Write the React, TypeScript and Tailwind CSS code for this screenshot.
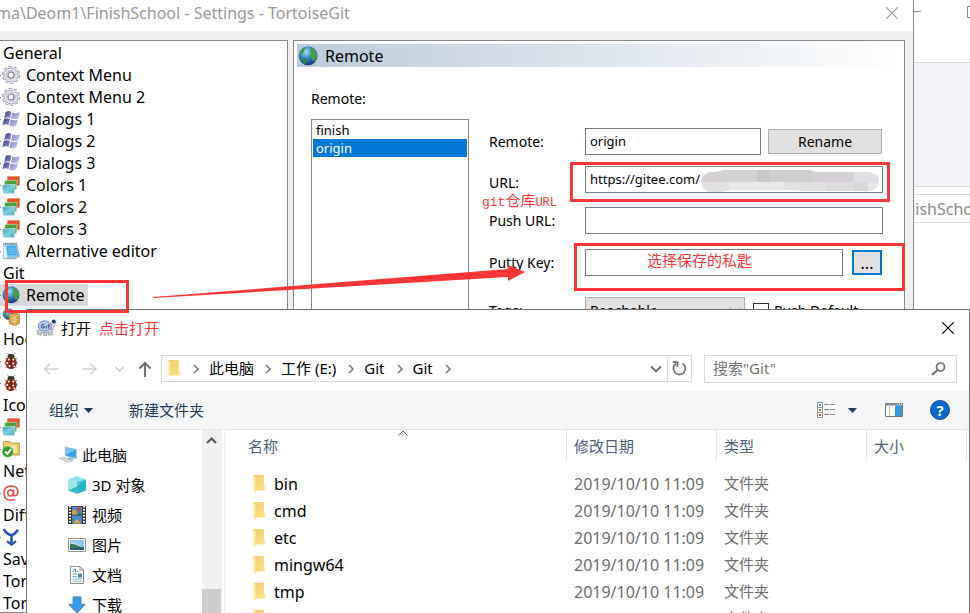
import { useState } from "react";
import type { ReactNode } from "react";

const files = ["bin", "cmd", "etc", "mingw64", "tmp", "usr"];

function Gradients() {
  return (
    <svg className="absolute w-0 h-0" aria-hidden="true">
      <defs>
        <radialGradient id="globe" cx="0.4" cy="0.3" r="0.75">
          <stop offset="0" stopColor="#a8dcf8" /><stop offset="0.45" stopColor="#3b86cc" /><stop offset="1" stopColor="#0e2a6b" />
        </radialGradient>
        <linearGradient id="teal" x1="0" y1="0" x2="1" y2="1">
          <stop offset="0" stopColor="#2a9cb4" /><stop offset="0.5" stopColor="#7fd0dc" /><stop offset="1" stopColor="#2d9fb8" />
        </linearGradient>
        <linearGradient id="folder" x1="0" y1="0" x2="1" y2="1">
          <stop offset="0" stopColor="#eecb6c" /><stop offset="1" stopColor="#ffe28c" />
        </linearGradient>
        <linearGradient id="flagDark" x1="0" y1="0" x2="1" y2="1">
          <stop offset="0" stopColor="#3c3c86" /><stop offset="1" stopColor="#8f90cc" />
        </linearGradient>
        <linearGradient id="flagLight" x1="0" y1="0" x2="1" y2="1">
          <stop offset="0" stopColor="#7b7cc4" /><stop offset="1" stopColor="#cfd0f4" />
        </linearGradient>
      </defs>
    </svg>
  );
}

function Icon({ children, size = 18 }: { children: ReactNode; size?: number }) {
  return <svg width={size} height={size} viewBox="0 0 18 18" fill="none" className="shrink-0" aria-hidden="true">{children}</svg>;
}

const GearIcon = () => (
  <Icon>
    <circle cx="9" cy="9" r="7.8" stroke="#8f8fa2" strokeWidth="2.4" strokeDasharray="3 1.9" />
    <circle cx="9" cy="9" r="6.9" fill="#e2e2ec" stroke="#9a9aac" strokeWidth="1" />
    <circle cx="9" cy="9" r="7.4" stroke="#e6e6ef" strokeWidth="1.6" strokeDasharray="2.3 2.35" strokeDashoffset="-0.3" />
    <circle cx="9" cy="9" r="4.4" stroke="#c3c3d2" strokeWidth="0.9" />
    <circle cx="9" cy="9" r="3" fill="#fff" stroke="#838398" strokeWidth="1.2" />
  </Icon>
);

const FlagIcon = () => (
  <Icon>
    <path d="M3.6 2.2C5.7.6 7.3.7 9.4 1.9L8.1 8C6.2 7 4.5 7 2.2 8.2Z" fill="url(#flagDark)" />
    <path d="M10.4 2.4C12.5 3.5 14.9 3.5 17.8 2.2L16.1 8.4C13.4 9.6 11.3 9.4 9.1 8.4Z" fill="url(#flagLight)" />
    <path d="M1.9 9.1C4 7.9 6 7.9 7.9 9L6.5 15C4.6 13.9 2.7 14 .4 15.2Z" fill="url(#flagDark)" />
    <path d="M8.8 9.5C11.1 10.6 13.2 10.6 15.800 9.400L14.200 15.600C11.600 17 9.300 16.800 7.300 15.600Z" fill="url(#flagLight)" />
  </Icon>
);

const ColorsIcon = () => (
  <Icon>
    <path d="M5.500 .6L17.700.4V9L14.500 10L5 6Z" fill="#e9502b" stroke="#d98a6c" strokeWidth="0.6" />
    <path d="M3 4.600L15.300 4.200L14.200 13.500L12 14L2.500 10Z" fill="#46a13a" stroke="#bcdcae" strokeWidth="0.7" />
    <path d="M.4 9L13.200 8.400L12.200 17.200L1.300 17.600Z" fill="url(#teal)" stroke="#c2e0e6" strokeWidth="0.8" />
  </Icon>
);

const NotepadIcon = () => (
  <Icon>
    <path d="M1.500 1.500L14.500 1.200L17.400 14.500L12 17L1.300 16.600Z" fill="#8fc7e8" stroke="#8a9aa8" strokeWidth="0.8" />
    <path d="M4.2 4L13.5 3.6L15.8 13.2L5.5 13.6Z" fill="#45aeea" />
    <path d="M1.500 3L3.8 4.4L5.2 16L1.500 16.400Z" fill="#dff0f7" />
    <path d="M3 1.8H14" stroke="#8c7c4c" strokeWidth="1.8" strokeDasharray="1 1.2" />
    <path d="M6 6.5L14 6M6.5 8.7L14.5 8.3M7 11L15 10.6" stroke="#7acaf5" strokeWidth="0.8" />
  </Icon>
);

const GlobeIcon = ({ size = 18 }: { size?: number }) => (
  <Icon size={size}>
    <ellipse cx="11" cy="16.3" rx="6" ry="1.5" fill="#bfc2c6" />
    <circle cx="9" cy="8.8" r="8.5" fill="url(#globe)" />
    <path d="M1.800 5.500C2.800 3.200 4.500 1.600 6.500 .9L7.200 2.200L5.200 3.600L5.600 5.200L3.800 6.600L4.400 8.200L2.600 8.800Z" fill="#3f9c48" />
    <path d="M3.500 10.500L6 10.600L8 12.400L7.600 14.600L6.600 16.600L4.400 14.800Z" fill="#2f8640" />
    <path d="M10.800 2.400L13.400 2L16 4.800L17.200 8.500L16 12.400L13.600 14.500L12.600 11.200L10.800 9.400L11.400 6.400Z" fill="#3fa04a" />
  </Icon>
);

const GlobeBoxIcon = () => (
  <Icon>
    <circle cx="6.5" cy="6" r="5.8" fill="url(#globe)" />
    <path d="M1.5 4L5 1L6 3L4 6L5 9L3 9Z" fill="#3d9a48" />
    <path d="M7 6.5L13.5 4.5L18 6.5V15L13 17.7L7 15.5Z" fill="#cda34e" stroke="#a9843b" strokeWidth="0.6" />
    <path d="M7.5 7L12.7 8.7V17M12.7 8.7L17.7 7" stroke="#ecd28c" strokeWidth="0.8" />
    <circle cx="12" cy="11.8" r="2.1" stroke="#f0e4c0" strokeWidth="0.9" />
  </Icon>
);

const BugIcon = () => (
  <Icon>
    <path d="M5.5 1.2L7.4 3.5M12.7 1.2L10.8 3.5M4.3 7L2.8 6M4 11H2.3M5 14.5L3.6 16M13.8 7L15.2 6M14 11H15.8M13 14.5L14.5 16" stroke="#666" strokeWidth="0.8" />
    <ellipse cx="9" cy="4.5" rx="3.5" ry="2.5" fill="#333" />
    <ellipse cx="9" cy="10.7" rx="5.8" ry="6.3" fill="#8f2e19" />
    <path d="M9 5V17" stroke="#4b1a10" strokeWidth="0.9" />
    <g fill="#fff"><circle cx="6.9" cy="7.5" r="1" /><circle cx="11.3" cy="7.5" r="1" /><circle cx="5.2" cy="11" r="1" /><circle cx="7.6" cy="13.9" r="1" /><circle cx="11.2" cy="11.6" r="1" /><circle cx="12.2" cy="14.4" r="0.8" /></g>
  </Icon>
);

const CheckFolderIcon = () => (
  <Icon>
    <path d="M1 3.500Q1 1.500 3 1.500H7.500L9 3H16.500Q18 3 18 4.500V13.500Q18 15 16.500 15H3Z" fill="#e8cb68" stroke="#a58c35" strokeWidth="0.8" />
    <path d="M3 5.500H14.500V13H3Z" fill="#f5e7a6" />
    <circle cx="5.700" cy="11.700" r="5.400" fill="#2f9f2f" stroke="#7abf6c" strokeWidth="0.6" />
    <path d="M3.2 11.5L5.4 14L9 9.2" stroke="#fff" strokeWidth="2" />
  </Icon>
);

const MergeIcon = () => (
  <Icon>
    <path d="M1.500 1Q5.500 7 9.500 7Q13 6.500 16 1.800M9.500 7V15.500" stroke="#2b55b2" strokeWidth="2.600" />
    <path d="M5 13.200L9.500 16.800L14 13.200" stroke="#2b55b2" strokeWidth="2.200" />
  </Icon>
);

const AtIcon = () => (
  <Icon>
    <circle cx="8.600" cy="9" r="2.900" stroke="#f04545" strokeWidth="1.500" />
    <path d="M11.800 5.500L11.400 10.200Q11.600 12.200 13.400 11.600Q16 10.700 16 8Q15.800 2 9.300 2Q2 2.200 2 9.200Q2.200 16.200 9 16.300Q11 16.300 12.800 15.400" stroke="#f04545" strokeWidth="1.500" />
  </Icon>
);

const FolderIcon = () => (
  <svg width="13" height="18" viewBox="0 0 13 18" className="shrink-0" aria-hidden="true">
    <path d="M1 0H12V10.5L13 11.5V15.5H3Z" fill="url(#folder)" />
    <path d="M1 0L4 2.5V17.5L1 15.5Z" fill="#ffeeb0" />
    <path d="M4 2.5V17.5L3.2 17V2Z" fill="#f4d885" />
  </svg>
);

const TurtleIcon = () => (
  <Icon size={20}>
    <path d="M3 11L1 14.500L4.500 15.500L5.500 12ZM11 12L11.500 15.500L15 15L14 11Z" fill="#d8dadc" stroke="#888c92" strokeWidth="0.7" />
    <path d="M6.500 13L7 15.800H10L9.500 13Z" fill="#c8cacd" stroke="#888c92" strokeWidth="0.5" />
    <ellipse cx="8" cy="11.600" rx="7.200" ry="1.700" fill="#dcdee0" stroke="#888c92" strokeWidth="0.6" />
    <ellipse cx="8" cy="7.200" rx="6" ry="4.600" fill="#b4cbf0" stroke="#6d86b4" strokeWidth="0.9" />
    <path d="M7.400 5.800Q4.800 4.900 4.600 7.500Q4.900 9.800 7.300 8.900V7.600H6.200M9.300 7V9.500M11.500 5.400V9.500M10.600 6.800H12.700" stroke="#344e86" strokeWidth="0.9" />
    <path d="M13.600 9.500L14 5.500L15.500 2.800L17.600 4L16.600 6.800L14.900 10.500Z" fill="#dcdee0" stroke="#777b80" strokeWidth="0.6" />
    <circle cx="16" cy="3.200" r="1.800" fill="#1d455e" />
  </Icon>
);

const MonitorIcon = () => (
  <Icon>
    <path d="M6 1L17.3 3.4V12.5L6.5 9.8Z" fill="#34a1df" stroke="#a6c7dc" strokeWidth="0.8" />
    <path d="M6.5 1.6L16.8 3.9L7 8.8Z" fill="#73c6f2" />
    <path d="M9.5 11L14.5 12.3V13.5L9 13Z" fill="#9ba9b7" />
    <path d="M.3 12.3L4.2 11.2L13.8 14.5L9.8 16.2Z" fill="#d7dde2" stroke="#a1adb8" strokeWidth="0.6" />
  </Icon>
);

const CubeIcon = () => (
  <Icon>
    <path d="M0 3.500L9 .2L18 3.500L9 6.200Z" fill="#8fe3ee" />
    <path d="M0 3.500L9 6.200V17.800L0 14.500Z" fill="#9fe4ec" />
    <path d="M18 3.500L9 6.200V17.800L18 14.500Z" fill="#22b5cb" />
    <path d="M0 14.500L9 10.500V17.800Z" fill="#3cb7ca" />
    <path d="M18 3.500L9 10.500V6.200Z" fill="#43c6d8" />
  </Icon>
);

const FilmIcon = () => (
  <Icon>
    <path d="M0 0H18V18H0Z" fill="#3a3a3a" />
    <path d="M2 0V18M16 0V18" stroke="#fff" strokeWidth="2" strokeDasharray="1.5 1.5" />
    <path d="M4 .8H14V8.6H4ZM4 9.6H14V17.5H4Z" fill="#4f8ccc" />
    <path d="M4 5.5L7 3L9 8.6H4ZM5 17.5L9 13L13 17.5Z" fill="#d7a53b" />
    <circle cx="11" cy="3.5" r="2.1" fill="#bd4b36" /><path d="M9 8.6L12 6L14 8.6ZM4 12L6 14L5 17Z" fill="#48723d" />
  </Icon>
);

const PictureIcon = () => (
  <Icon>
    <path d="M.5 2.5H17.5V15.5H.5Z" fill="#fff" stroke="#939393" />
    <path d="M2 4H16V14H2Z" fill="#91c8f1" />
    <path d="M2 6Q7 7 16 11V14H2Z" fill="#d4e7ef" />
    <path d="M2 7.5Q8 8 12 10.5L16 11V14H2Z" fill="#39775c" />
    <path d="M2 12.7L16 11.5V14H2Z" fill="#285b87" />
  </Icon>
);

const DocIcon = () => (
  <Icon>
    <path d="M2.5.5H12L15.5 4V17.5H2.5Z" fill="#fff" stroke="#8b8b8b" />
    <path d="M12 .5V4H15.5" stroke="#8b8b8b" />
    <path d="M4.5 6L6.8 3H7.5V6" stroke="#3b91d4" />
    <path d="M9 5.5H10.5M4.5 8H9M4.5 10.5H9M4.5 13H13.5M4.5 15.2H13.5" stroke="#739eb9" strokeWidth="0.9" />
    <path d="M10 7.5H14V11.5H10Z" fill="#438fbe" />
  </Icon>
);

const DownloadIcon = () => (
  <Icon><path d="M5 .8H13V8.4H17.2L9 17.2L.8 8.4H5Z" fill="#3b9be8" stroke="#2e7fc2" strokeWidth="0.7" /></Icon>
);

const Cross = () => (
  <svg width="12" height="12" viewBox="0 0 12 12" aria-hidden="true"><path d="M0 0L12 12M12 0L0 12" stroke="currentColor" strokeWidth="1.1" /></svg>
);

const Chevron = ({ className = "" }: { className?: string }) => (
  <svg width="6" height="10" viewBox="0 0 6 10" fill="none" className={`shrink-0 text-[#808080] ${className}`} aria-hidden="true">
    <path d="M1 1L5 5L1 9" stroke="currentColor" strokeWidth="1.7" />
  </svg>
);

const Triangle = () => (
  <svg width="9" height="5" viewBox="0 0 9 5" aria-hidden="true"><path d="M0 0H9L4.5 5Z" fill="#1e395b" /></svg>
);

const tree: { label?: string; icon?: () => ReactNode }[] = [
  { label: "General" },
  { label: "Context Menu", icon: GearIcon },
  { label: "Context Menu 2", icon: GearIcon },
  { label: "Dialogs 1", icon: FlagIcon },
  { label: "Dialogs 2", icon: FlagIcon },
  { label: "Dialogs 3", icon: FlagIcon },
  { label: "Colors 1", icon: ColorsIcon },
  { label: "Colors 2", icon: ColorsIcon },
  { label: "Colors 3", icon: ColorsIcon },
  { label: "Alternative editor", icon: NotepadIcon },
  { label: "Git" },
  { label: "Remote", icon: GlobeIcon },
  { icon: GlobeBoxIcon },
  { label: "Hoo" },
  { icon: BugIcon },
  { icon: BugIcon },
  { label: "Icon" },
  { icon: ColorsIcon },
  { icon: CheckFolderIcon },
  { label: "Net" },
  { icon: AtIcon },
  { label: "Diff" },
  { icon: MergeIcon },
  { label: "Sav" },
  { label: "Tor" },
  { label: "Tor" },
];

const places = [
  { label: "3D 对象", icon: CubeIcon },
  { label: "视频", icon: FilmIcon },
  { label: "图片", icon: PictureIcon },
  { label: "文档", icon: DocIcon },
  { label: "下载", icon: DownloadIcon },
];

function ExplorerWindow() {
  return (
    <div className="absolute inset-y-0 right-0 w-[120px] bg-white text-[#8a8a8a] overflow-hidden">
      <div className="h-[62px] flex justify-end items-start pt-[6px]">
        <svg width="57" height="12" viewBox="0 0 57 12" fill="none" aria-hidden="true"><path d="M0 5.5H8M54.5.5H65.5V11.5H54.5Z" stroke="#8a8a8a" /></svg>
      </div>
      <div className="h-[125px] bg-[#f4f5f8] border-y border-[#d9d9d9]" />
      <div className="mt-[7px] h-[29px] border-y border-[#d9d9d9] pl-[43px] flex items-center text-base">FinishSchool</div>
    </div>
  );
}

function SettingsTree() {
  const [selected, setSelected] = useState(11);
  return (
    <ul className="w-72 shrink-0 bg-white border border-l-0 border-[#828790] pt-px overflow-hidden text-base">
      {tree.map((item, i) => {
        const ItemIcon = item.icon;
        return (
          <li key={i} onClick={() => setSelected(i)} className="h-[22px] flex cursor-default">
            <span className={["flex items-center h-full whitespace-nowrap", ItemIcon ? "gap-[6px] pr-1" : "pl-[3px]",
              selected === i ? "bg-[#d9d9d9]" : ""].join(" ")}>
              {ItemIcon && <span className="flex items-center gap-px"><span className="w-px h-px bg-[#808080]" /><ItemIcon /></span>}
              {item.label}
            </span>
          </li>
        );
      })}
    </ul>
  );
}

function RemoteForm() {
  const [remote, setRemote] = useState("origin");
  const [url, setUrl] = useState("https://gitee.com/");
  const [pushUrl, setPushUrl] = useState("");
  const [puttyKey, setPuttyKey] = useState("");
  const [pushDefault, setPushDefault] = useState(false);
  const label = "w-24 shrink-0";
  const input = "min-w-0 flex-1 h-[27px] bg-white border border-[#7a7a7a] px-1 pb-px outline-none text-[13px]";

  return (
    <div className="flex gap-5 pl-[14px] pr-[18px] text-sm flex-1 min-h-0">
      <div className="w-[158px] shrink-0 flex flex-col pt-[22px]">
        <span className="h-[30px]" id="remotes">Remote:</span>
        <ul role="listbox" aria-labelledby="remotes" className="flex-1 border border-[#828790] p-px text-[13px] leading-[18px]">
          {["finish", "origin"].map((r) => (
            <li key={r} role="option" aria-selected={remote === r} onClick={() => setRemote(r)}
              className={["px-[3px]", remote === r ? "bg-[#0078d7] text-white" : ""].join(" ")}>{r}</li>
          ))}
        </ul>
      </div>

      <form className="flex-1 min-w-0 flex flex-col pt-[61px]" onSubmit={(e) => e.preventDefault()}>
        <div className="flex items-center">
          <label htmlFor="remote" className={label}>Remote:</label>
          <input id="remote" value={remote} onChange={(e) => setRemote(e.target.value)} className={input} />
          <button type="button" className="ml-[7px] mr-px w-[114px] h-[25px] bg-[#e1e1e1] border border-[#adadad]">Rename</button>
        </div>
        <div className="flex items-end mt-[11px]">
          <label htmlFor="url" className={label}>URL:</label>
          <div className="relative flex-1 flex">
            <input id="url" value={url} onChange={(e) => setUrl(e.target.value)} className={input} />
            <svg viewBox="0 0 178 22" width="178" height="22" className="absolute right-1 top-1" aria-hidden="true">
              <clipPath id="smear"><path d="M10 2Q18 2 22 0H108Q112 2 120 2H166Q178 3 178 12Q177 20 167 21H105L96 20H28Q24 22 10 22Q0 20 0 11Q2 3 10 2Z" /></clipPath>
              <g clipPath="url(#smear)">
                <path d="M0 0H178V22H0Z" fill="#dcdcde" />
                <path d="M0 0H28V12H0Z" fill="#d5d1d4" /><path d="M28 0H56V12H28Z" fill="#d2d2d5" /><path d="M56 0H69V12H56Z" fill="#c8c8ca" />
                <path d="M69 0H111V12H69Z" fill="#cecdcf" /><path d="M111 0H153V12H111Z" fill="#d4d0d5" /><path d="M153 0H178V12H153Z" fill="#dfe0e3" />
                <path d="M0 12H28V22H0Z" fill="#e1e1e3" /><path d="M28 12H83V22H28Z" fill="#e7e7e8" /><path d="M83 12H125V22H83Z" fill="#dfe0e2" />
                <path d="M153 12H167V22H153Z" fill="#d8d8d9" /><path d="M167 12H178V22H167Z" fill="#e6e6ea" />
              </g>
            </svg>
          </div>
        </div>
        <div className="flex items-center mt-[14px]">
          <label htmlFor="push" className={label}>Push URL:</label>
          <input id="push" value={pushUrl} onChange={(e) => setPushUrl(e.target.value)} className={input} />
        </div>
        <div className="flex items-center mt-[15px]">
          <label htmlFor="putty" className={label}>Putty Key:</label>
          <input id="putty" value={puttyKey} onChange={(e) => setPuttyKey(e.target.value)} className={input} />
          <button type="button" className="ml-[9px] mr-px w-[30px] h-[25px] bg-[#e1e1e1] border-2 border-[#0078d7] flex items-center justify-center text-base">...</button>
        </div>
        <div className="flex items-center mt-[21px]">
          <label htmlFor="tags" className={label}>Tags:</label>
          <div className="relative">
            <select id="tags" className="appearance-none w-40 h-[27px] px-1 bg-[#e1e1e1] border border-[#adadad]">
              <option>Reachable</option>
            </select>
            <svg width="10" height="6" viewBox="0 0 10 6" fill="none" className="absolute right-[5px] top-[11px]" aria-hidden="true"><path d="M.5.5L5 5L9.5.5" stroke="#444" /></svg>
          </div>
          <label className="flex items-center gap-[5px] ml-2 whitespace-nowrap">
            <input type="checkbox" checked={pushDefault} onChange={(e) => setPushDefault(e.target.checked)}
              className="appearance-none size-4 border border-[#333] bg-white checked:bg-[#0078d7]" />
            Push Default
          </label>
        </div>
      </form>
    </div>
  );
}

function SettingsWindow() {
  return (
    <div className="absolute inset-y-0 left-0 right-14 bg-[#f0f0f0] border-r border-[#8a8a8a] flex flex-col overflow-hidden">
      <div className="h-[31px] shrink-0 bg-white flex items-center justify-between pr-[15px] pb-[6px] text-base text-[#999]">
        <span className="-ml-1 whitespace-nowrap">ma\Deom1\FinishSchool - Settings - TortoiseGit</span>
        <button type="button" aria-label="Close"><Cross /></button>
      </div>
      <div className="flex-1 min-h-0 flex gap-[5px] pt-[9px] pr-2">
        <SettingsTree />
        <div className="flex-1 min-w-0 bg-white border border-[#828790] p-[3px] pb-0 flex flex-col">
          <h2 className="h-[23px] shrink-0 pl-px flex items-center gap-[7px] text-base bg-linear-to-r from-[#bccbda] to-white"><GlobeIcon size={20} />Remote</h2>
          <RemoteForm />
        </div>
      </div>
    </div>
  );
}

function OpenDialog() {
  const [query, setQuery] = useState("");
  return (
    <div role="dialog" aria-label="打开" className="absolute top-[309px] bottom-0 left-[26px] right-0 bg-white border border-b-0 border-[#707070] flex flex-col overflow-hidden text-[15px]">
      <div className="h-9 shrink-0 flex items-center pl-[9px] pr-[15px]">
        <TurtleIcon />
        <span className="ml-[5px]">打开</span>
        <span className="ml-2 text-[#fc3636]">点击打开</span>
        <button type="button" aria-label="关闭" className="ml-auto"><Cross /></button>
      </div>

      <div className="h-[45px] shrink-0 flex items-center pl-4 pr-3">
        <svg width="112" height="18" viewBox="0 0 112 18" fill="none" className="shrink-0" aria-hidden="true">
          <path d="M15.5 9H1.5M7 3.5L1.5 9L7 14.5M39 9H53M47.5 3.5L53 9L47.5 14.5" stroke="#d0d0d0" strokeWidth="1.5" />
          <path d="M72.5 7L76.5 11L80.5 7" stroke="#c8c8c8" strokeWidth="1.4" />
          <path d="M102 17V3M96.5 8.5L102 3L107.5 8.5" stroke="#707070" strokeWidth="2" />
        </svg>
        <nav className="ml-[6px] flex-1 h-[27px] border border-[#d9d9d9] flex items-center pl-[5px]">
          <FolderIcon />
          <Chevron className="ml-[13px]" />
          <a href="#pc" className="ml-[10px]">此电脑</a>
          <Chevron className="ml-[11px]" />
          <a href="#e" className="ml-[10px]">工作 (E:)</a>
          <Chevron className="ml-3" />
          <a href="#git" className="ml-[10px]">Git</a>
          <Chevron className="ml-3" />
          <a href="#git2" className="ml-[10px]">Git</a>
          <Chevron className="ml-3" />
          <svg width="12" height="8" viewBox="0 0 12 8" fill="none" className="ml-auto mr-[5px]" aria-hidden="true"><path d="M1 1.5L6 6.5L11 1.5" stroke="#707070" strokeWidth="1.8" /></svg>
          <button type="button" aria-label="刷新" className="w-6 h-full border-l border-[#d9d9d9] flex items-center justify-center">
            <svg width="15" height="15" viewBox="0 0 15 15" fill="none" aria-hidden="true">
              <path d="M10.5 2.5A6 6 0 1 1 4.3 2.5" stroke="#707070" strokeWidth="1.7" /><path d="M.8 1.2H5.5V6" stroke="#707070" strokeWidth="1.7" />
            </svg>
          </button>
        </nav>
        <div className="ml-3 w-[253px] h-7 border border-[#d9d9d9] flex items-center pl-2 pr-[10px]">
          <input aria-label={'搜索"Git"'} placeholder={'搜索"Git"'} value={query} onChange={(e) => setQuery(e.target.value)}
            className="flex-1 min-w-0 outline-none placeholder-[#757575]" />
          <svg width="15" height="14" viewBox="0 0 15 14" fill="none" aria-hidden="true"><circle cx="9.5" cy="5" r="4" stroke="#707070" strokeWidth="1.7" /><path d="M6.5 8L1 13" stroke="#707070" strokeWidth="2" /></svg>
        </div>
      </div>

      <div className="h-[39px] shrink-0 bg-[#f4f6f8] border-b border-[#e5e5e5] flex items-center pl-[22px] pr-[19px] text-[#1e395b]">
        <button type="button" className="flex items-center gap-[5px]">组织<Triangle /></button>
        <button type="button" className="ml-9">新建文件夹</button>
        <button type="button" aria-label="更改视图" className="ml-auto flex items-center gap-[13px]">
          <svg width="18" height="16" viewBox="0 0 18 16" fill="none" aria-hidden="true">
            <path d="M.5.5H5.5V15.5H.5ZM.5 5.5H5.5M.5 10.5H5.5" fill="#fff" stroke="#8e8e8e" />
            <path d="M2 2H4V4H2Z" fill="#2684d1" /><path d="M2 7H4V9H2Z" fill="#928642" /><path d="M2 12H4V14H2Z" fill="#c1502e" />
            <path d="M7 2.5H12M13 2.5H18M7 7.5H12M13 7.5H18M7 12.5H12M13 12.5H18" stroke="#8e8e8e" />
          </svg>
          <Triangle />
        </button>
        <button type="button" aria-label="预览窗格" className="ml-7">
          <svg width="18" height="14" viewBox="0 0 18 14" fill="none" aria-hidden="true">
            <path d="M.5.5H17.5V13.5H.5Z" fill="#fff" stroke="#777" /><path d="M0 0H18V2.5H0Z" fill="#888" /><path d="M10 2.5H17V13H10Z" fill="#3697e2" /><path d="M4.5 2.5V13" stroke="#bbb" /><path d="M12 1.2H17" stroke="#fff" strokeDasharray="1 1" />
          </svg>
        </button>
        <button type="button" aria-label="帮助" className="ml-[27px] size-5 rounded-full bg-[#0067cb] border border-[#174d85] text-white font-bold text-[15px] leading-none flex items-center justify-center">?</button>
      </div>

      <div className="flex-1 min-h-0 flex">
        <ul className="w-[175px] shrink-0 pt-[10px] overflow-hidden">
          <li className="h-[30px] flex items-center gap-[5px] pl-8"><MonitorIcon />此电脑</li>
          {places.map(({ label, icon: PlaceIcon }) => (
            <li key={label} className="h-[30px] flex items-center gap-[6px] pl-[41px]"><PlaceIcon />{label}</li>
          ))}
        </ul>
        <div className="w-5 shrink-0 bg-[#f0f0f0] flex flex-col justify-between">
          <svg width="20" height="22" viewBox="0 0 20 22" fill="none" aria-hidden="true"><path d="M5 13L9.5 8.5L14 13" stroke="#555" strokeWidth="2" /></svg>
          <div className="h-6 mr-px bg-[#cdcdcd]" />
        </div>
        <div className="flex-1 min-w-0 ml-[2px] border-l border-[#f0f0f0] overflow-hidden">
          <table className="w-full table-fixed text-left">
            <colgroup>
              <col /><col className="w-[150px]" /><col className="w-[150px]" /><col className="w-[100px]" /><col className="w-[2px]" />
            </colgroup>
            <thead className="text-[#4c607a]">
              <tr>
                <th className="relative p-0 pb-2 font-normal">
                  <svg width="10" height="6" viewBox="0 0 10 6" fill="none" className="absolute left-[173px] top-0" aria-hidden="true"><path d="M.5 5.5L5 1L9.5 5.5" stroke="#666" /></svg>
                  <div className="h-8 flex items-center pl-[23px] border-r border-[#e5e5e5]">名称</div>
                </th>
                <th className="p-0 pb-2 font-normal"><div className="h-8 flex items-center pl-[7px] border-r border-[#e5e5e5]">修改日期</div></th>
                <th className="p-0 pb-2 font-normal"><div className="h-8 flex items-center pl-[7px] border-r border-[#e5e5e5]">类型</div></th>
                <th className="p-0 pb-2 font-normal"><div className="h-8 flex items-center pl-[7px] border-r border-[#e5e5e5]">大小</div></th>
                <th className="p-0" />
              </tr>
            </thead>
            <tbody>
              {files.map((f) => (
                <tr key={f} className="h-[27px] text-[#6d6d6d]">
                  <td className="p-0"><div className="h-[27px] flex items-center gap-[9px] pl-[27px] text-base text-black"><FolderIcon />{f}</div></td>
                  <td className="p-0 pl-[7px] text-base whitespace-nowrap">2019/10/10 11:09</td>
                  <td className="p-0 pl-[7px]">文件夹</td>
                  <td className="p-0" />
                  <td className="p-0" />
                </tr>
              ))}
            </tbody>
          </table>
        </div>
      </div>
    </div>
  );
}

// red marks drawn over the windows
function Annotations() {
  return (
    <div className="absolute inset-0 pointer-events-none text-[#fc3636] text-[15px] leading-5">
      <div className="absolute left-[5px] top-[280px] w-[124px] h-[33px] border-3 border-[#fc3636]" />
      <div className="absolute left-[570px] top-[162px] w-[320px] h-10 border-3 border-[#fc3636]" />
      <div className="absolute left-[574px] top-[243px] w-[331px] h-12 border-3 border-[#fc3636]" />
      <span className="absolute left-[482px] top-[193px] whitespace-nowrap font-['Liberation_Mono','Noto_Sans_CJK_SC',monospace]">
        <span className="text-[13px]">git</span>仓库<span className="text-xs">URL</span>
      </span>
      <span className="absolute left-[647px] top-[250px] whitespace-nowrap">选择保存的私匙</span>
      <svg width="372" height="36" viewBox="0 0 372 36" className="absolute left-[153px] top-[264px]" aria-hidden="true">
        <path d="M0 33L355 5V1L372 8L355 17V13L0 34Z" fill="#fc3636" />
      </svg>
    </div>
  );
}

export default function App() {
  return (
    <main className="relative h-screen overflow-hidden bg-white text-black font-['Noto_Sans','Noto_Sans_CJK_SC',sans-serif]">
      <Gradients />
      <ExplorerWindow />
      <SettingsWindow />
      <OpenDialog />
      <Annotations />
    </main>
  );
}
